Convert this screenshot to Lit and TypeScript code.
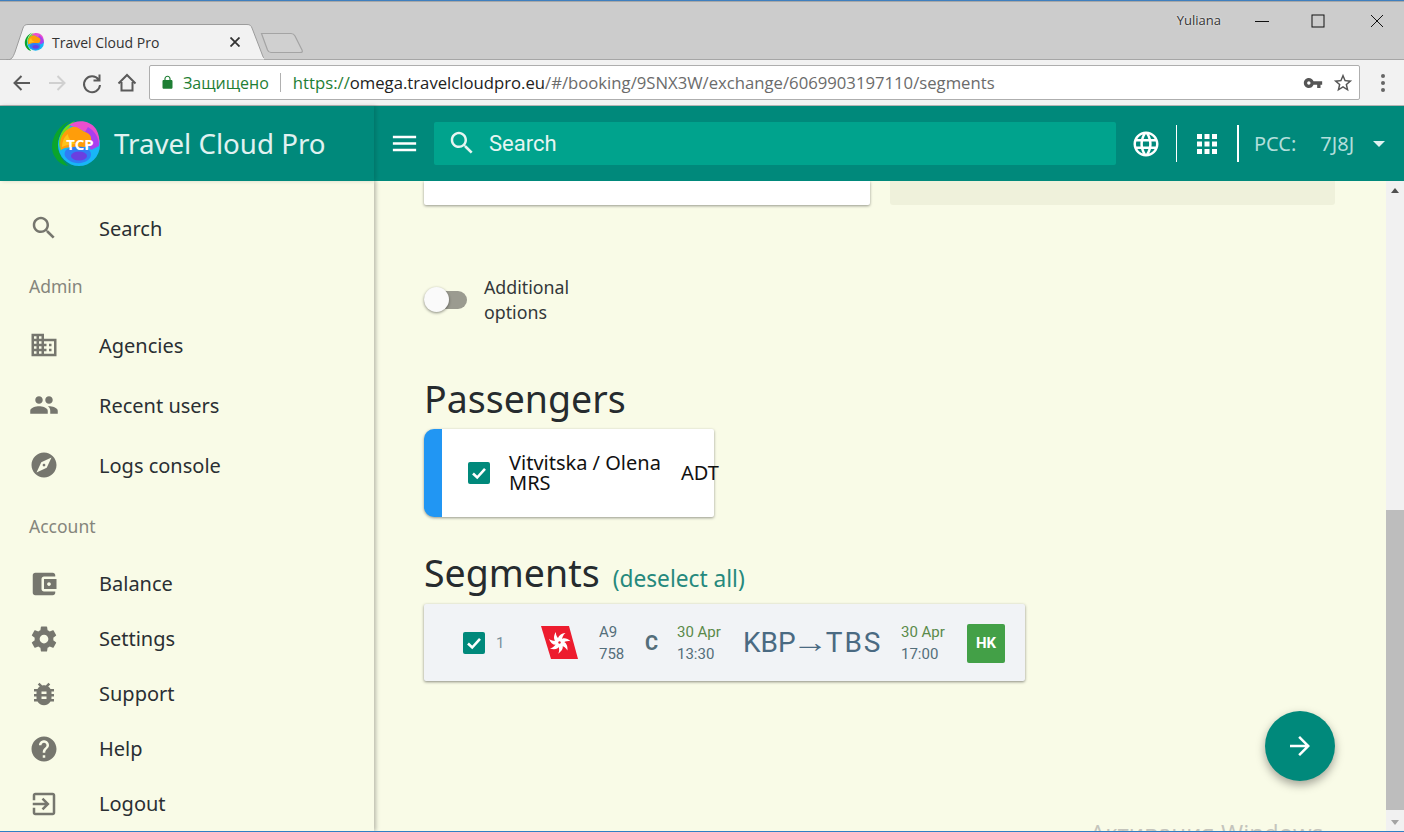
import { LitElement, html, svg, css } from 'lit'
import { customElement } from 'lit/decorators.js'

const P = {
  search: 'M15.5 14h-.79l-.28-.27C15.41 12.59 16 11.11 16 9.5 16 5.91 13.09 3 9.5 3S3 5.91 3 9.5 5.91 16 9.5 16c1.61 0 3.09-.59 4.23-1.57l.27.28v.79l5 4.99L20.49 19l-4.99-5zm-6 0C7.01 14 5 11.99 5 9.5S7.01 5 9.5 5 14 7.01 14 9.5 11.99 14 9.5 14z',
  domain: 'M12 7V3H2v18h20V7H12zM6 19H4v-2h2v2zm0-4H4v-2h2v2zm0-4H4V9h2v2zm0-4H4V5h2v2zm4 12H8v-2h2v2zm0-4H8v-2h2v2zm0-4H8V9h2v2zm0-4H8V5h2v2zm10 12h-8v-2h2v-2h-2v-2h2v-2h-2V9h8v10zm-2-8h-2v2h2v-2zm0 4h-2v2h2v-2z',
  people: 'M16 11c1.66 0 2.99-1.34 2.99-3S17.66 5 16 5c-1.66 0-3 1.34-3 3s1.34 3 3 3zm-8 0c1.66 0 2.99-1.34 2.99-3S9.66 5 8 5C6.34 5 5 6.34 5 8s1.34 3 3 3zm0 2c-2.33 0-7 1.17-7 3.5V19h14v-2.5c0-2.33-4.67-3.5-7-3.5zm8 0c-.29 0-.62.02-.97.05 1.16.84 1.97 1.97 1.97 3.45V19h6v-2.5c0-2.33-4.67-3.5-7-3.5z',
  explore: 'M12 10.9c-.61 0-1.1.49-1.1 1.1s.49 1.1 1.1 1.1c.61 0 1.1-.49 1.1-1.1s-.49-1.1-1.1-1.1zM12 2C6.48 2 2 6.48 2 12s4.48 10 10 10 10-4.48 10-10S17.52 2 12 2zm2.19 12.19L6 18l3.81-8.19L18 6l-3.81 8.19z',
  wallet: 'M21 18v1c0 1.1-.9 2-2 2H5c-1.11 0-2-.9-2-2V5c0-1.1.89-2 2-2h14c1.1 0 2 .9 2 2v1h-9c-1.11 0-2 .9-2 2v8c0 1.1.89 2 2 2h9zm-9-2h10V8H12v8zm4-2.5c-.83 0-1.5-.67-1.5-1.5s.67-1.5 1.5-1.5 1.5.67 1.5 1.5-.67 1.5-1.5 1.5z',
  settings: 'M19.43 12.98c.04-.32.07-.64.07-.98s-.03-.66-.07-.98l2.11-1.65c.19-.15.24-.42.12-.64l-2-3.46c-.12-.22-.39-.3-.61-.22l-2.49 1c-.52-.4-1.08-.73-1.69-.98l-.38-2.65C14.46 2.18 14.25 2 14 2h-4c-.25 0-.46.18-.49.42l-.38 2.65c-.61.25-1.17.59-1.69.98l-2.49-1c-.23-.09-.49 0-.61.22l-2 3.46c-.13.22-.07.49.12.64l2.11 1.65c-.04.32-.07.65-.07.98s.03.66.07.98l-2.11 1.65c-.19.15-.24.42-.12.64l2 3.46c.12.22.39.3.61.22l2.49-1c.52.4 1.08.73 1.69.98l.38 2.65c.03.24.24.42.49.42h4c.25 0 .46-.18.49-.42l.38-2.65c.61-.25 1.17-.59 1.69-.98l2.49 1c.23.09.49 0 .61-.22l2-3.46c.12-.22.07-.49-.12-.64l-2.11-1.65zM12 15.5c-1.93 0-3.5-1.57-3.5-3.5s1.57-3.5 3.5-3.5 3.5 1.57 3.5 3.5-1.57 3.5-3.5 3.5z',
  bug: 'M20 8h-2.81c-.45-.78-1.07-1.45-1.82-1.96L17 4.41 15.59 3l-2.17 2.17C12.96 5.06 12.49 5 12 5c-.49 0-.96.06-1.41.17L8.41 3 7 4.41l1.62 1.63C7.88 6.55 7.26 7.22 6.81 8H4v2h2.09c-.05.33-.09.66-.09 1v1H4v2h2v1c0 .34.04.67.09 1H4v2h2.81c1.04 1.79 2.97 3 5.19 3s4.15-1.21 5.19-3H20v-2h-2.09c.05-.33.09-.66.09-1v-1h2v-2h-2v-1c0-.34-.04-.67-.09-1H20V8zm-6 8h-4v-2h4v2zm0-4h-4v-2h4v2z',
  help: 'M12 2C6.48 2 2 6.48 2 12s4.48 10 10 10 10-4.48 10-10S17.52 2 12 2zm1 17h-2v-2h2v2zm2.07-7.75l-.9.92C13.45 12.9 13 13.5 13 15h-2v-.5c0-1.1.45-2.1 1.17-2.83l1.24-1.26c.37-.36.59-.86.59-1.41 0-1.1-.9-2-2-2s-2 .9-2 2H8c0-2.21 1.79-4 4-4s4 1.79 4 4c0 .88-.36 1.68-.93 2.25z',
  logout: 'M10.09 15.59L11.5 17l5-5-5-5-1.41 1.41L12.67 11H3v2h9.67l-2.58 2.59zM19 3H5c-1.11 0-2 .9-2 2v4h2V5h14v14H5v-4H3v4c0 1.1.89 2 2 2h14c1.1 0 2-.9 2-2V5c0-1.1-.9-2-2-2z',
  globe: 'M11.99 2C6.47 2 2 6.48 2 12s4.47 10 9.99 10C17.52 22 22 17.52 22 12S17.52 2 11.99 2zm6.93 6h-2.95c-.32-1.25-.78-2.45-1.38-3.56 1.84.63 3.37 1.91 4.33 3.56zM12 4.04c.83 1.2 1.48 2.53 1.91 3.96h-3.82c.43-1.43 1.08-2.76 1.91-3.96zM4.26 14C4.1 13.36 4 12.69 4 12s.1-1.36.26-2h3.38c-.08.66-.14 1.32-.14 2 0 .68.06 1.34.14 2H4.26zm.82 2h2.95c.32 1.25.78 2.45 1.38 3.56-1.84-.63-3.37-1.9-4.33-3.56zm2.95-8H5.08c.96-1.66 2.49-2.93 4.33-3.56C8.81 5.55 8.35 6.75 8.03 8zM12 19.96c-.83-1.2-1.48-2.53-1.91-3.96h3.82c-.43 1.43-1.08 2.76-1.91 3.96zM14.34 14H9.66c-.09-.66-.16-1.32-.16-2 0-.68.07-1.35.16-2h4.68c.09.65.16 1.32.16 2 0 .68-.07 1.34-.16 2zm.25 5.56c.6-1.11 1.06-2.31 1.38-3.56h2.95c-.96 1.65-2.49 2.93-4.33 3.56zM16.36 14c.08-.66.14-1.32.14-2 0-.68-.06-1.34-.14-2h3.38c.16.64.26 1.31.26 2s-.1 1.36-.26 2h-3.38z',
  apps: 'M4 8h4V4H4v4zm6 12h4v-4h-4v4zm-6 0h4v-4H4v4zm0-6h4v-4H4v4zm6 0h4v-4h-4v4zm6-10v4h4V4h-4zm-6 4h4V4h-4v4zm6 6h4v-4h-4v4zm0 6h4v-4h-4v4z',
  menu: 'M3 18h18v-2H3v2zm0-5h18v-2H3v2zm0-7v2h18V6H3z',
  forward: 'M12 4l-1.41 1.41L16.17 11H4v2h12.17l-5.58 5.59L12 20l8-8z',
  key: 'M12.65 10C11.83 7.67 9.61 6 7 6c-3.31 0-6 2.69-6 6s2.69 6 6 6c2.61 0 4.83-1.67 5.65-4H17v4h4v-4h2v-4H12.65zM7 14c-1.1 0-2-.9-2-2s.9-2 2-2 2 .9 2 2-.9 2-2 2z',
  star: 'M22 9.24l-7.19-.62L12 2 9.19 8.63 2 9.24l5.46 4.73L5.82 21 12 17.27 18.18 21l-1.63-7.03L22 9.24zM12 15.4l-3.76 2.27 1-4.28-3.32-2.88 4.38-.38L12 6.1l1.71 4.04 4.38.38-3.32 2.88 1 4.28L12 15.4z',
  lock: 'M18 8h-1V6c0-2.76-2.24-5-5-5S7 3.24 7 6v2H6c-1.1 0-2 .9-2 2v10c0 1.1.9 2 2 2h12c1.1 0 2-.9 2-2V10c0-1.1-.9-2-2-2zm-2.9 0H8.9V6c0-1.71 1.39-3.1 3.1-3.1 1.71 0 3.1 1.39 3.1 3.1v2z',
}

const icon = (d: string, size = 24, fill = 'currentColor') =>
  html`<svg class="ico" width=${size} height=${size} viewBox="0 0 24 24" fill=${fill}><path d=${d}></path></svg>`

const stroke = (d: string, size: number, color: string, w = 2) =>
  html`<svg class="ico" width=${size} height=${size} viewBox="0 0 24 24" fill="none" stroke=${color} stroke-width=${w}><path d=${d}></path></svg>`

const tick = html`<svg class="ico" width="18" height="18" viewBox="0 0 18 18" fill="none" stroke="#fff" stroke-width="2.6"><path d="M3 9.5 7.2 13.5 15 4.8"></path></svg>`

// multicolour blob used for the favicon and the header logo
const logo = (size: number, withText: boolean) => html`
  <svg class="ico" width=${size} height=${size} viewBox="0 0 50 50">
    <path d="M20 2C6 7-3 26 5 38c3 5 7 8 13 9C10 39 7 31 8 22 9 14 13 7 20 2z" fill="#0aa52c"></path>
    <circle cx="29" cy="26" r="21" fill="#18b6f6"></circle>
    <path d="M25 2C15 6 9 14 9 24c0 3 1 6 2 8 0-12 5-22 14-30z" fill="#6fe01c"></path>
    <path d="M19 6c8-6 21-5 27 4 3 5 4 11 3 16-6-8-12-14-30-20z" fill="#ea4fce"></path>
    <path d="M38 8c7 4 11 11 11 19l-8 4-8-15z" fill="#a83ff0"></path>
    <path d="M11 31c-3-10 2-20 11-23 6-1 8 3 13 5 4 1 7 4 6 9-1 6-8 7-14 6-6 0-12 0-16 3z" fill="#ff9d0a"></path>
    <path d="M12 28c0-5 2-10 6-13 0 5 4 8 9 10-6 0-11 1-15 3z" fill="#ffc31a"></path>
    <path d="M16 31c5-4 16-5 22-1 4 3 4 8 0 11-5 4-13 4-18 1-5-3-7-7-4-11z" fill="#2f7df5"></path>
    <ellipse cx="29" cy="37" rx="8" ry="4.5" fill="#6a3fe0"></ellipse>
    ${withText
      ? svg`<text x="30" y="31" text-anchor="middle" font-family="'Noto Sans', sans-serif" font-weight="700" font-size="15" fill="#fff">TCP</text>`
      : null}
  </svg>`

const topNav = [{ i: P.search, t: 'Search' }]
const adminNav = [
  { i: P.domain, t: 'Agencies' },
  { i: P.people, t: 'Recent users' },
  { i: P.explore, t: 'Logs console' },
]
const accountNav = [
  { i: P.wallet, t: 'Balance' },
  { i: P.settings, t: 'Settings' },
  { i: P.bug, t: 'Support' },
  { i: P.help, t: 'Help' },
  { i: P.logout, t: 'Logout' },
]

@customElement('app-root')
export class AppRoot extends LitElement {
  static styles = css`
    :host {
      display: block;
      width: 1404px;
      height: 832px;
      overflow: hidden;
      font-family: 'Noto Sans', sans-serif;
    }
    * { box-sizing: border-box; }
    .ico { display: block; flex: none; }
    .page {
      position: relative;
      height: 832px;
      display: flex;
      flex-direction: column;
      border-top: 1px solid #3f7fbe;
      border-bottom: 1px solid #2f7fc4;
      overflow: hidden;
    }

    /* browser chrome */
    .strip {
      height: 59px;
      flex: none;
      background: #cccccc;
      border-top: 1px solid #a8a8a8;
      display: flex;
      align-items: flex-end;
      padding-left: 6px;
      position: relative;
    }
    .strip::after {
      content: '';
      position: absolute;
      left: 0;
      right: 0;
      bottom: 0;
      height: 1px;
      background: #a6a6a6;
    }
    .tab {
      position: relative;
      z-index: 1;
      width: 258px;
      height: 36px;
      display: flex;
      align-items: center;
      padding: 0 0 0 18px;
      gap: 8px;
      font-size: 14px;
      font-family: 'Open Sans', sans-serif;
      color: #333;
    }
    .tab-bg { position: absolute; left: 0; top: 0; }
    .tab > :not(.tab-bg) { position: relative; }
    .tab-title { width: 150px; white-space: nowrap; }
    .tab-x { color: #333; margin-left: 20px; }
    .newtab { margin: 0 0 6px -4px; position: relative; z-index: 1; }
    .win {
      margin-left: auto;
      align-self: flex-start;
      display: flex;
      align-items: center;
      height: 38px;
      color: #222;
    }
    .user {
      font-family: 'Open Sans', sans-serif;
      font-size: 13px;
      color: #333;
      text-shadow: 0 0 2px #fff;
      margin-right: 34px;
      margin-top: -3px;
    }
    .win svg { margin-right: 42px; }
    .win svg:nth-of-type(2) { margin-right: 45px; }
    .win svg:last-child { margin-right: 20px; }

    .bar {
      height: 46px;
      flex: none;
      background: #f2f2f2;
      border-bottom: 1px solid #b4b4b4;
      display: flex;
      align-items: center;
      padding-left: 10px;
    }
    .nav { display: flex; align-items: center; gap: 11px; width: 139px; color: #5a5a5a; }
    .omni {
      width: 1211px;
      height: 35px;
      background: #fff;
      border: 1px solid #aeaeae;
      border-radius: 2px;
      display: flex;
      align-items: center;
      padding: 0 5px 0 10px;
      font-family: 'Open Sans', sans-serif;
      font-size: 16px;
      color: #6b6b6b;
      white-space: nowrap;
    }
    .secure { color: #1e7e34; margin-left: 8px; }
    .sep { width: 1px; height: 19px; background: #b0b0b0; margin: 0 12px 0 11px; }
    .url { font-size: 16.7px; }
    .https { color: #1e7e34; }
    .host { color: #222; }
    .omni-end { margin-left: auto; display: flex; align-items: center; gap: 9px; color: #555; }
    .dots { margin-left: 21px; display: flex; flex-direction: column; gap: 3px; }
    .dots i { width: 4px; height: 4px; border-radius: 50%; background: #666; display: block; }

    /* app header */
    .top {
      height: 75px;
      flex: none;
      background: #00897b;
      display: flex;
      align-items: center;
      color: #fff;
      position: relative;
      z-index: 3;
    }
    .brand {
      width: 374px;
      height: 75px;
      flex: none;
      display: flex;
      align-items: center;
      padding-left: 50px;
      gap: 14px;
      font-size: 27.7px;
      color: #e0f2f1;
      box-shadow: 2px 0 4px rgba(0, 0, 0, 0.15);
      white-space: nowrap;
    }
    .brand span { margin-top: -2px; }
    .burger { margin: 0 14px 0 15px; }
    .find {
      width: 682px;
      height: 43px;
      background: #00a38d;
      border-radius: 2px;
      display: flex;
      align-items: center;
      padding-left: 13px;
      gap: 12px;
      font-family: Roboto, sans-serif;
      font-size: 22px;
      color: #e6f5f2;
      margin-top: -1px;
    }
    .globe { margin-left: 15px; }
    .vr { width: 1px; height: 37px; background: #fff; margin: 0 15px; }
    .vr.a { width: 2px; margin: 0 15px; }
    .pcc { font-size: 20px; color: #b2dfdb; white-space: nowrap; }
    .pcc b { font-weight: 400; margin-left: 24px; }
    .caret {
      width: 0;
      height: 0;
      border: 6px solid transparent;
      border-top: 6px solid #e0f2f1;
      border-bottom: 0;
      margin-left: 19px;
    }

    /* sidebar */
    .body { flex: 1; min-height: 0; display: flex; background: #f9fbe7; }
    .side {
      width: 374px;
      flex: none;
      padding-top: 17px;
      box-shadow: 2px 0 4px rgba(0, 0, 0, 0.25);
      position: relative;
      z-index: 2;
    }
    .item {
      display: flex;
      align-items: center;
      height: 60px;
      padding-left: 29px;
      gap: 40px;
      font-size: 20px;
      color: #2a2f33;
    }
    .item svg { color: #76766e; }
    .group.acc .item { height: 55px; }
    .label {
      font-size: 17.5px;
      color: #85857c;
      padding-left: 29px;
      height: 28px;
      line-height: 28px;
    }
    .label.admin { margin: 14px 0 15px; }
    .label.account { margin: 17px 0 16px; }

    /* content */
    .main { flex: 1; min-width: 0; padding: 0 51px 0 50px; color: #262b2e; }
    .tops { display: flex; gap: 20px; height: 24px; }
    .tops .white {
      width: 446px;
      background: #fff;
      border-radius: 0 0 2px 2px;
      box-shadow: 0 1px 3px rgba(0, 0, 0, 0.4);
    }
    .tops .grey {
      flex: 1;
      background: #eff1db;
      border-radius: 0 0 3px 3px;
    }
    .opts { display: flex; align-items: center; margin-top: 70px; font-size: 17.8px; line-height: 25px; color: #33383a; gap: 17px; }
    .switch { position: relative; width: 43px; height: 18px; border-radius: 9px; background: #9b9b90; }
    .switch::after {
      content: '';
      position: absolute;
      left: 0;
      top: -4px;
      width: 25px;
      height: 25px;
      border-radius: 50%;
      background: #fafafa;
      box-shadow: 0 1px 3px rgba(0, 0, 0, 0.45);
    }
    h2 { font-size: 37.5px; font-weight: 400; margin: 0; line-height: 50px; }
    .h-pass { margin-top: 49px; }
    .pax {
      width: 290px;
      height: 88px;
      margin-top: 5px;
      background: #fff;
      border-radius: 10px 2px 2px 10px;
      border-left: 18px solid #2196f3;
      box-shadow: 0 1px 3px rgba(0, 0, 0, 0.4);
      display: flex;
      align-items: center;
      padding: 0 0 0 26px;
      font-size: 20px;
      line-height: 20px;
      color: #111;
      white-space: nowrap;
    }
    .box {
      width: 22px;
      height: 22px;
      flex: none;
      background: #00897b;
      border-radius: 2px;
      display: flex;
      align-items: center;
      justify-content: center;
    }
    .pax-name { flex: none; margin-left: 19px; width: 172px; }
    .pax-type { flex: none; }
    .seg-head { display: flex; align-items: baseline; gap: 13px; margin-top: 31px; }
    .seg-head a { font-size: 22.7px; color: #26897d; }
    .seg {
      width: 601px;
      height: 77px;
      margin-top: 6px;
      background: #f1f3f6;
      border-radius: 2px;
      box-shadow: 0 1px 3px rgba(0, 0, 0, 0.45);
      display: flex;
      align-items: center;
      padding-left: 39px;
      font-family: Roboto, sans-serif;
      font-size: 15px;
      line-height: 22px;
      color: #546e7a;
      white-space: nowrap;
    }
    .num { margin-left: 11px; width: 45px; font-size: 15px; color: #78909c; }
    .plane { width: 58px; }
    .fl { width: 46px; }
    .cls { width: 32px; font-size: 20px; font-weight: 700; }
    .dt { width: 66px; }
    .dt em { font-style: normal; color: #5a8a4a; display: block; }
    .route { width: 158px; font-size: 28px; color: #4a6a82; }
    .route span {
      font-family: 'Liberation Sans', sans-serif;
      display: inline-block;
      transform: scaleX(1.3);
      margin-right: 2px;
    }
    .route i { font-style: normal; letter-spacing: 2px; }
    .hk {
      width: 38px;
      height: 39px;
      margin-top: 1px;
      background: #43a047;
      border-radius: 2px;
      color: #fff;
      font-weight: 700;
      font-size: 15px;
      display: flex;
      align-items: center;
      justify-content: center;
    }

    .scroll {
      width: 18px;
      flex: none;
      background: #f1f1f1;
      display: flex;
      flex-direction: column;
      align-items: center;
    }
    .arrow { height: 18px; display: flex; align-items: center; justify-content: center; flex: none; }
    .tri { width: 0; height: 0; border: 4px solid transparent; }
    .tri.up { border-bottom: 5px solid #505050; border-top: 0; }
    .tri.down { border-top: 5px solid #a3a3a3; border-bottom: 0; }
    .track { flex: 1; width: 100%; padding-top: 311px; }
    .thumb { height: 300px; background: #bdbdbd; }

    /* overlays */
    .fab {
      position: absolute;
      left: 1265px;
      top: 710px;
      width: 70px;
      height: 70px;
      border-radius: 50%;
      background: #00897b;
      color: #fff;
      display: flex;
      align-items: center;
      justify-content: center;
      box-shadow: 0 4px 10px rgba(0, 0, 0, 0.35);
      z-index: 4;
    }
    .watermark {
      position: absolute;
      left: 1090px;
      top: 819px;
      font-family: 'Open Sans', sans-serif;
      font-size: 24px;
      line-height: 26px;
      color: #c4c4bc;
      white-space: nowrap;
      z-index: 4;
    }
  `

  private navItems(items: { i: string; t: string }[]) {
    return items.map((n) => html`<div class="item">${icon(n.i, 30)}<span>${n.t}</span></div>`)
  }

  render() {
    return html`
      <div class="page">
        <div class="strip">
          <div class="tab">
            <svg class="tab-bg" width="258" height="36" viewBox="0 0 258 36">
              <path d="M0.5 36 C6 36 7 33 9 28 L17 4 C18 1.5 19 0.5 22 0.5 L241 0.5 C244 0.5 245 1.5 246 4 L256 30 C257 33 258 36 263 36 Z" fill="#f2f2f2" stroke="#9c9c9c"></path>
            </svg>
            ${logo(20, false)}
            <span class="tab-title">Travel Cloud Pro</span>
            <svg class="ico tab-x" width="10" height="10" viewBox="0 0 10 10" stroke="#333" stroke-width="1.8"><path d="M0.5 0.5 9.5 9.5M9.5 0.5 0.5 9.5"></path></svg>
          </div>
          <svg class="ico newtab" width="44" height="22" viewBox="0 0 44 22">
            <path d="M1.5 1.5 H31 C33 1.5 34 2 35 4 L42 18 C43 20 42 20.5 40 20.5 H11 C9 20.5 8.5 20 7.5 18 Z" fill="#d0d0d0" stroke="#a4a4a4" stroke-width="1.2"></path>
          </svg>
          <div class="win">
            <span class="user">Yuliana</span>
            <svg width="14" height="14" viewBox="0 0 14 14" stroke="#111" stroke-width="1"><path d="M0 7.5H14"></path></svg>
            <svg width="14" height="14" viewBox="0 0 14 14" fill="none" stroke="#111" stroke-width="1"><rect x="1" y="1" width="12" height="12"></rect></svg>
            <svg width="14" height="14" viewBox="0 0 14 14" stroke="#111" stroke-width="1"><path d="M1 1 13 13M13 1 1 13"></path></svg>
          </div>
        </div>

        <div class="bar">
          <div class="nav">
            ${stroke('M20 12H5M11.5 5 4.5 12l7 7', 24, '#5a5a5a')}
            ${stroke('M4 12h15M12.5 5l7 7-7 7', 24, '#d0d0d0')}
            ${stroke('M18.5 8.5A8 8 0 1 0 20 14M19.5 3.5v6h-6', 24, '#5a5a5a')}
            ${stroke('M3.5 12.5 12 4l8.5 8.5M6.5 11v8.5h11V11', 24, '#5a5a5a')}
          </div>
          <div class="omni">
            ${icon(P.lock, 15, '#1e7e34')}
            <span class="secure">Защищено</span>
            <span class="sep"></span>
            <span class="url"><span class="https">https://</span><span class="host">omega.travelcloudpro.eu</span>/#/booking/9SNX3W/exchange/6069903197110/segments</span>
            <span class="omni-end">${icon(P.key, 20)}${icon(P.star, 22)}</span>
          </div>
          <div class="dots"><i></i><i></i><i></i></div>
        </div>

        <div class="top">
          <div class="brand">${logo(50, true)}<span>Travel Cloud Pro</span></div>
          <div class="burger">${icon(P.menu, 31)}</div>
          <div class="find">${icon(P.search, 30)}<span>Search</span></div>
          <div class="globe">${icon(P.globe, 30)}</div>
          <div class="vr"></div>
          ${icon(P.apps, 30)}
          <div class="vr a"></div>
          <div class="pcc">PCC:<b>7J8J</b></div>
          <div class="caret"></div>
        </div>

        <div class="body">
          <nav class="side">
            <div class="group">${this.navItems(topNav)}</div>
            <div class="label admin">Admin</div>
            <div class="group">${this.navItems(adminNav)}</div>
            <div class="label account">Account</div>
            <div class="group acc">${this.navItems(accountNav)}</div>
          </nav>

          <main class="main">
            <div class="tops"><div class="white"></div><div class="grey"></div></div>
            <div class="opts">
              <div class="switch"></div>
              <div>Additional<br />options</div>
            </div>
            <h2 class="h-pass">Passengers</h2>
            <div class="pax">
              <div class="box">${tick}</div>
              <div class="pax-name">Vitvitska / Olena<br />MRS</div>
              <div class="pax-type">ADT</div>
            </div>
            <div class="seg-head">
              <h2>Segments</h2>
              <a>(deselect all)</a>
            </div>
            <div class="seg">
              <div class="box">${tick}</div>
              <div class="num">1</div>
              <div class="plane">
                <svg class="ico" width="38" height="34" viewBox="0 0 38 34">
                  <polygon points="0,0 28,0 37,33 10,33" fill="#ed1c2e"></polygon>
                  <g transform="translate(18.5 16.5)">
                    ${[0, 51.4, 102.8, 154.3, 205.7, 257.1, 308.6].map(
                      (a) => svg`<path fill="#fff" transform="rotate(${a})" d="M-1.5 -2.5 C-2 -6 1 -9 6 -9.5 C3.5 -7.5 2.5 -5 2.5 -2 Z"></path>`
                    )}
                    <circle r="3" fill="#fff"></circle>
                    <circle r="1.2" fill="#ed1c2e"></circle>
                  </g>
                </svg>
              </div>
              <div class="fl">A9<br />758</div>
              <div class="cls">C</div>
              <div class="dt"><em>30 Apr</em>13:30</div>
              <div class="route">KBP<span>→</span><i>TBS</i></div>
              <div class="dt"><em>30 Apr</em>17:00</div>
              <div class="hk">HK</div>
            </div>
          </main>

          <div class="scroll">
            <div class="arrow"><div class="tri up"></div></div>
            <div class="track"><div class="thumb"></div></div>
            <div class="arrow"><div class="tri down"></div></div>
          </div>
        </div>

        <div class="fab">${icon(P.forward, 30)}</div>
        <div class="watermark">Активация Windows</div>
      </div>
    `
  }
}
